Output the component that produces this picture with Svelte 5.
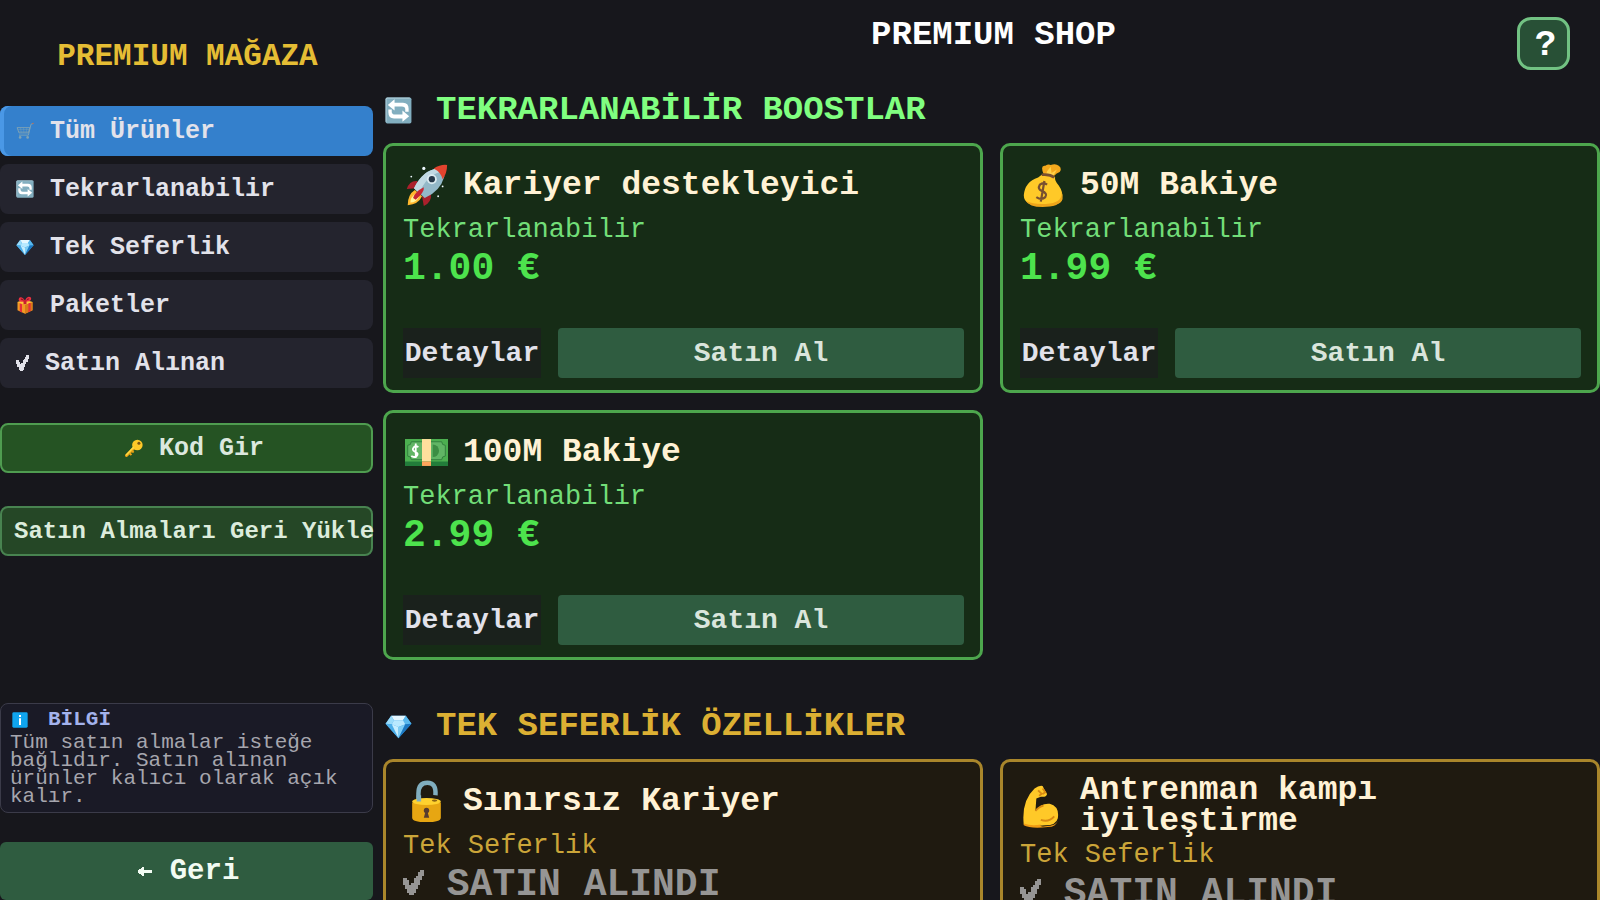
<script lang="ts">
    type Product = {
        icon: string;
        name: string;
        price?: string;
    };

    const categories = [
        { id: 'all', icon: 'cart', label: 'Tüm Ürünler' },
        { id: 'repeat', icon: 'repeat', label: 'Tekrarlanabilir' },
        { id: 'once', icon: 'gem', label: 'Tek Seferlik' },
        { id: 'bundles', icon: 'gift', label: 'Paketler' },
        { id: 'owned', icon: '', label: 'Satın Alınan' }
    ];

    const boosts: Product[] = [
        { icon: 'rocket', name: 'Kariyer destekleyici', price: '1.00 €' },
        { icon: 'moneybag', name: '50M Bakiye', price: '1.99 €' },
        { icon: 'cash', name: '100M Bakiye', price: '2.99 €' }
    ];

    const features: Product[] = [
        { icon: 'unlock', name: 'Sınırsız Kariyer' },
        { icon: 'arm', name: 'Antrenman kampı iyileştirme' }
    ];

    let active = $state('all');
</script>

{#snippet check()}
    <svg class="check" viewBox="0 0 10 12" aria-hidden="true" shape-rendering="crispEdges">
        <path d="M8 0h2v3H9v2H8v2H7v2H6v2H5v1H3v-1H2v-2H1V7H0V4h2v1h1v2h1V6h1V4h1V3h1V1h1z" fill="currentColor" />
    </svg>
{/snippet}

{#snippet icon(name: string)}
    <svg class="icon" viewBox="0 0 48 48" aria-hidden="true">
        {#if name === 'cart'}
            <g fill="none" stroke="#7fa3b5" stroke-width="2.5">
                <path d="M46 4l-6 2-7 29H8" />
                <path d="M3 15h34l-4 14H8z" />
                <path d="M5 20h31M7 25h27M12 15l2 14M20 15l1 14M29 15l-2 14" stroke-width="1" />
            </g>
            <path d="M42 3l5-1-1 4z" fill="#d9663a" />
            <circle cx="11" cy="41" r="3.5" fill="#7fa3b5" />
            <circle cx="31" cy="41" r="3.5" fill="#7fa3b5" />
        {:else if name === 'repeat'}
            <rect x="1" y="1" width="46" height="46" rx="3" fill="#82aebf" />
            <path d="M2 44V4q0-2 2-2h40" fill="none" stroke="#a9c9d5" stroke-width="2" />
            <path d="M5 14L17 4v6h15q10 0 10 11v5h-6v-4q0-5-6-5H17v7z" fill="#fff" />
            <path d="M43 34L31 44v-6H16Q6 38 6 27v-5h6v4q0 5 6 5h13v-7z" fill="#fff" />
        {:else if name === 'gem'}
            <path d="M11 5h26l10 14-23 26L1 19z" fill="#3ca3e6" />
            <path d="M11 5h26l-5 8H16z" fill="#e5f7ff" />
            <path d="M11 5l5 8-4 7L1 19z" fill="#9bdcfa" />
            <path d="M37 5l-5 8 4 7 11-1z" fill="#59b9ee" />
            <path d="M16 13h16l4 7-12 5-12-5z" fill="#b8e9ff" />
            <path d="M1 19l11 1 12 25z" fill="#4caee9" />
            <path d="M12 20l12 5v20z" fill="#c6eeff" />
            <path d="M36 20l-12 5v20z" fill="#7dcdf5" />
            <path d="M47 19l-11 1-12 25z" fill="#1c78c2" />
        {:else if name === 'gift'}
            <path d="M4 16l20-5 20 5v22L24 47 4 38z" fill="#f29a25" />
            <path d="M24 23l20-7v22l-20 9z" fill="#d97b17" />
            <path d="M4 16l20-5 20 5-20 7z" fill="#ffc83b" />
            <path d="M10 20l6 2v22l-6-3zM33 20l6-2v22l-6 3z" fill="#e6303a" />
            <path d="M22 15Q7 16 7 9q1-8 9-5 6 3 8 9 3-10 10-11 8 0 6 7-2 6-16 6z" fill="#ed3242" />
            <path d="M22 12q-4-6-9-5-2 4 9 5zM27 12q3-6 8-6 2 4-8 6z" fill="#8e1726" />
            <path d="M20 11h8v11h-8z" fill="#c81e32" />
        {:else if name === 'key'}
            <path d="M24 24L4 44" stroke="#e9a315" stroke-width="8" stroke-linecap="round" />
            <path d="M12 37l5 6M18 31l5 5" stroke="#e9a315" stroke-width="5" />
            <circle cx="33" cy="16" r="14" fill="#ffc928" />
            <path d="M22 23L4 42" stroke="#ffda45" stroke-width="4" stroke-linecap="round" />
            <circle cx="37" cy="11" r="4" fill="#7b5616" />
        {:else if name === 'info'}
            <rect x="1" y="1" width="46" height="46" rx="4" fill="#10a5ee" />
            <path d="M21 9h6v6h-6zM21 19h6v20h-6z" fill="#fff" />
        {:else if name === 'rocket'}
            <path d="M14 19Q5 18 2 28l10-1zM29 33q1 10-8 14l-2-11z" fill="#aa202c" />
            <path d="M11 29Q3 34 3 46q12-1 16-10z" fill="#ffb72d" />
            <path d="M12 33Q6 37 6 43q7 0 10-7z" fill="#fff59b" />
            <path d="M10 27Q20 7 36 5l8 9q-5 17-22 24z" fill="#93b8c8" />
            <path d="M10 27Q20 7 36 5l3 4Q23 14 16 33z" fill="#c0d9e3" />
            <path d="M32 5Q40 0 47 1q0 9-5 16-2-8-10-12z" fill="#e3432e" />
            <circle cx="30" cy="17" r="5.5" fill="#dcebf1" />
            <circle cx="30" cy="17" r="3.5" fill="#26394a" />
            <path d="M9 38Q11 31 21 26q1 5-9 14z" fill="#c72533" />
            <g fill="#eef9ff">
                <circle cx="21" cy="5" r="1.8" />
                <circle cx="7" cy="14" r="1" />
                <circle cx="42" cy="25" r="1" />
                <circle cx="37" cy="36" r="1" />
            </g>
        {:else if name === 'moneybag'}
            <path d="M24 11Q20 1 26 2q3-2 6-1 6-2 9 1 4 3 1 7-3 1-7 5z" fill="#f4a91d" />
            <path d="M28 8l4-5 1 7 6-4-4 7-8-1z" fill="#ffd248" />
            <path d="M22 12q8-3 15 3-1 3 4 9 5 7 4 15-2 8-22 8Q2 47 2 35q1-15 16-20z" fill="#ffc928" />
            <path d="M44 30q2 12-13 14-16 2-27-3 4 7 19 7 18 0 22-8 1-5-1-10z" fill="#eda41a" />
            <path d="M22 12q9-1 14 3" fill="none" stroke="#795030" stroke-width="3" />
            <path d="M28 23q-4-3-8 0-3 5 2 7 7 3 4 7-4 4-10 0M25 19l-4 23" fill="none" stroke="#795030" stroke-width="2.5" />
        {:else if name === 'cash'}
            <path d="M0 10h48v29H0z" fill="#227d3a" />
            <path d="M0 9h48v25H0z" fill="#4caf50" />
            <path d="M7 12h34q0 4 4 4v12q-4 0-4 4H7q0-4-4-4V16q4 0 4-4z" fill="#61b565" stroke="#307c3c" />
            <path d="M31 15a7 7 0 1 1 0 14z" fill="#3c8d43" />
            <path d="M15 18q-3-2-5 0-3 3 1 5 5 2 2 5-3 2-6 0M12 14v16" fill="none" stroke="#fff" stroke-width="2" />
            <path d="M19 9h10v25H19z" fill="#ffdf9d" />
            <path d="M19 34h10v5H19z" fill="#ffa55c" />
        {:else if name === 'unlock'}
            <path d="M15 24v-9Q15 3 25 3t9 14" fill="none" stroke="#80aebf" stroke-width="5" />
            <path d="M8 25v17q0 5 16 5t16-5V25z" fill="#e7a612" />
            <ellipse cx="24" cy="24" rx="16" ry="4" fill="#ffd12f" />
            <ellipse cx="33" cy="23" rx="3" ry="1.2" fill="#8c6414" />
            <path d="M13 17h5v7h-5z" fill="#80aebf" />
            <circle cx="24" cy="34" r="3" fill="#563b2f" />
            <path d="M23 35h2l2 7h-6z" fill="#563b2f" />
        {:else if name === 'arm'}
            <path d="M2 45Q-1 18 14 4q5-4 9-3l3 6 2 3q-1 4-7 3l-5 2-1 14q6-9 16-8 11 3 9 16-2 8-14 8-18 2-24-1z" fill="#ffc928" />
            <path d="M2 43q9 3 19 1-3 3 5 2 12 0 14-6-2 7-11 7-20 2-27-2z" fill="#f09b14" />
            <path d="M15 29q4-5 9-6M21 39q9 3 15-4M18 6l4 4-3 2M23 4l3 4-3 2" fill="none" stroke="#d88913" stroke-width="2" />
        {/if}
    </svg>
{/snippet}

{#snippet card(product: Product, kind: string)}
    <article class="card {kind}">
        <div class="card-head">
            {@render icon(product.icon)}
            <h3>{product.name}</h3>
        </div>
        <p class="kind">{kind === 'boost' ? 'Tekrarlanabilir' : 'Tek Seferlik'}</p>
        <p class="price">
            {#if product.price}
                {product.price}
            {:else}
                {@render check()} SATIN ALINDI
            {/if}
        </p>
        <div class="actions">
            <button class="details">Detaylar</button>
            {#if product.price}
                <button class="buy">Satın Al</button>
            {/if}
        </div>
    </article>
{/snippet}

<div class="shop">
    <aside>
        <h2 class="brand">PREMIUM MAĞAZA</h2>

        <nav>
            {#each categories as category}
                <button
                    class="nav-item"
                    class:active={active === category.id}
                    onclick={() => (active = category.id)}
                >
                    {#if category.icon}
                        {@render icon(category.icon)}
                    {:else}
                        {@render check()}
                    {/if}
                    {category.label}
                </button>
            {/each}
        </nav>

        <button class="code">{@render icon('key')}Kod Gir</button>
        <button class="restore">Satın Almaları Geri Yükle</button>

        <section class="info">
            <h4>{@render icon('info')}BİLGİ</h4>
            <p>Tüm satın almalar isteğe bağlıdır. Satın alınan ürünler kalıcı olarak açık kalır.</p>
        </section>

        <button class="back">
            <svg class="arrow" viewBox="0 0 14 9" aria-hidden="true" shape-rendering="crispEdges">
                <path d="M0 3h1V2h2V1h1V0h2v3h8v3H6v3H4V8H3V7H1V6H0z" fill="currentColor" />
            </svg>
            Geri
        </button>
    </aside>

    <main>
        <header>
            <h1>PREMIUM SHOP</h1>
            <button class="help" aria-label="Yardım">?</button>
        </header>

        <section class="group">
            <h2 class="green">{@render icon('repeat')}TEKRARLANABİLİR BOOSTLAR</h2>
            <div class="grid">
                {#each boosts as product}
                    {@render card(product, 'boost')}
                {/each}
            </div>
        </section>

        <section class="group">
            <h2 class="gold">{@render icon('gem')}TEK SEFERLİK ÖZELLİKLER</h2>
            <div class="grid">
                {#each features as product}
                    {@render card(product, 'feature')}
                {/each}
            </div>
        </section>
    </main>
</div>

<style>
    :global(body) {
        background: #17171c;
    }

    .shop {
        display: grid;
        grid-template-columns: minmax(280px, 373px) 1fr;
        column-gap: 10px;
        height: 100vh;
        overflow: hidden;
        background: #17171c;
        color: #e2e2ea;
        font-family: 'Liberation Mono', 'DejaVu Sans Mono', monospace;
        font-weight: 700;
    }

    h1,
    h2,
    h3,
    h4,
    p {
        margin: 0;
        font-size: inherit;
        font-weight: inherit;
    }

    button {
        box-sizing: border-box;
        height: 50px;
        padding: 0;
        border: none;
        font: inherit;
        color: inherit;
        white-space: nowrap;
        cursor: pointer;
    }

    .icon {
        flex: none;
        display: block;
        width: 18px;
        height: 18px;
    }

    .check {
        flex: none;
        width: 13px;
        height: 16px;
    }

    .price .check {
        width: 21px;
        height: 25px;
    }

    aside {
        display: flex;
        flex-direction: column;
        min-width: 0;
        height: 100vh;
    }

    .brand {
        padding: 37px 0 29px 2px;
        color: #e5bd34;
        font-size: 31px;
        line-height: 40px;
        text-align: center;
    }

    nav {
        display: flex;
        flex-direction: column;
        gap: 8px;
        margin-bottom: 35px;
    }

    .nav-item {
        display: flex;
        align-items: center;
        gap: 16px;
        padding: 0 16px;
        border-radius: 8px;
        background: #24242e;
        font-size: 25px;
    }

    .nav-item.active {
        background: #3480cc;
        box-shadow: inset 4px 0 #4a98e6;
    }

    .code,
    .restore {
        display: flex;
        align-items: center;
        flex: none;
        border: 2px solid #4f9c50;
        border-radius: 8px;
        background: #255323;
    }

    .code {
        justify-content: center;
        gap: 16px;
        margin-bottom: 33px;
        padding-left: 16px;
        font-size: 25px;
        color: #dbe8de;
    }

    .restore {
        padding-left: 12px;
        border-color: #488350;
        background: #254726;
        color: #dcecdc;
        font-size: 24px;
    }

    .info {
        margin: auto 0 29px;
        padding: 6px 9px;
        border: 1px solid #3b3b49;
        border-radius: 8px;
        background: #1a1a26;
        color: #a6a6ae;
        font-size: 21px;
        line-height: 18px;
    }

    .info h4 {
        display: flex;
        align-items: center;
        gap: 20px;
        padding: 0 2px 4px;
        color: #a3b2ec;
        line-height: 20px;
    }

    .info .icon {
        width: 16px;
        height: 16px;
    }

    .info p {
        font-weight: 400;
    }

    .back {
        display: flex;
        align-items: center;
        justify-content: center;
        gap: 18px;
        flex: none;
        height: 58px;
        padding-left: 4px;
        border-radius: 6px;
        background: #2f5c40;
        color: #f2fbf3;
        font-size: 29px;
    }

    .arrow {
        width: 14px;
        height: 9px;
    }

    main {
        min-width: 0;
        height: 100vh;
        overflow-y: auto;
        scrollbar-width: none;
    }

    header {
        position: relative;
        padding: 15px 0 35px 4px;
        text-align: center;
    }

    h1 {
        color: #fff;
        font-size: 34px;
        line-height: 40px;
    }

    .help {
        position: absolute;
        top: 17px;
        right: 30px;
        width: 53px;
        height: 53px;
        padding: 4px 0 0 4px;
        border: 3px solid #72c283;
        border-radius: 14px;
        background: #285036;
        color: #fff;
        font-size: 36px;
        line-height: 36px;
    }

    .group {
        margin-bottom: 46px;
    }

    .group h2 {
        display: flex;
        align-items: center;
        gap: 24px;
        padding: 0 2px 13px;
        font-size: 34px;
        line-height: 40px;
    }

    .group h2 .icon {
        width: 27px;
        height: 27px;
    }

    .green {
        color: #80ff80;
    }

    .gold {
        color: #dcb033;
    }

    .grid {
        display: grid;
        grid-template-columns: 1fr 1fr;
        gap: 17px;
    }

    .card {
        display: flex;
        flex-direction: column;
        box-sizing: border-box;
        min-height: 250px;
        padding: 13px 16px 12px 17px;
        border: 3px solid #4da64d;
        border-radius: 10px;
        background: #162c16;
    }

    .card.feature {
        border-color: #a9862b;
        background: #1f1a10;
    }

    .card-head {
        display: flex;
        align-items: center;
        gap: 15px;
        min-height: 53px;
        padding-left: 2px;
    }

    .card-head .icon {
        width: 43px;
        height: 43px;
    }

    h3 {
        color: #fff2d5;
        font-size: 33px;
        line-height: 31px;
    }

    .kind {
        padding-top: 1px;
        color: #72de78;
        font-size: 27px;
        line-height: 34px;
        font-weight: 400;
    }

    .feature .kind {
        color: #cba539;
    }

    .price {
        padding-top: 2px;
        color: #4de34d;
        font-size: 38px;
        line-height: 40px;
    }

    .feature .price {
        color: #969594;
    }

    .actions {
        display: flex;
        gap: 17px;
        margin-top: auto;
        font-size: 28px;
    }

    .details {
        width: 138px;
        background: #1a211c;
    }

    .buy {
        flex: 1;
        border-radius: 4px;
        background: #2f5c40;
        color: #dae5dc;
    }
</style>
